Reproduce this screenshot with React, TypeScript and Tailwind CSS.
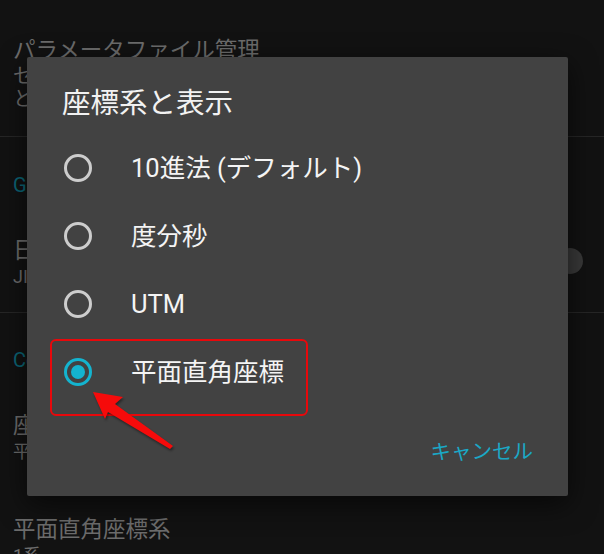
import React from 'react'

const font = { fontFamily: 'Roboto, "Noto Sans CJK JP", sans-serif' }

function Radio({ checked }: { checked?: boolean }) {
  if (checked) {
    return (
      <div className="w-[28px] h-[28px] rounded-full border-[3px] border-[#14b4cf] flex items-center justify-center shrink-0">
        <div className="w-[14px] h-[14px] rounded-full bg-[#14b4cf]" />
      </div>
    )
  }
  return <div className="w-[28px] h-[28px] rounded-full border-[3px] border-[#cdcdcd] shrink-0" />
}

const options = [
  { label: '10進法 (デフォルト)', checked: false },
  { label: '度分秒', checked: false },
  { label: 'UTM', checked: false },
  { label: '平面直角座標', checked: true },
]

export default function App() {
  return (
    <div className="relative w-[604px] h-[554px] overflow-hidden bg-[#121212] text-[#6c6c6c]" style={font}>
      {/* settings list behind the dialog */}
      <div className="flex flex-col">
        <div className="h-[137px] border-b border-[#262626] pl-[13px] pt-[35px] flex flex-col">
          <div className="text-[22.5px] leading-[30px]">パラメータファイル管理</div>
          <div className="text-[20px] leading-[23px] whitespace-nowrap w-[562px] overflow-hidden">セーブされた設定ファイルの読み込みと書き出しを行います</div>
          <div className="text-[20px] leading-[23px]">と削除</div>
        </div>
        <div className="h-[176px] border-b border-[#262626] relative">
          <div className="absolute top-[35px] left-[13px] text-[20px] leading-[26px] text-[#0b6475]">GPS</div>
        </div>
      </div>
      <div className="absolute top-[235px] left-[13px] flex flex-col">
        <div className="text-[22.5px] leading-[30px]">日本測地系</div>
        <div className="text-[18px] leading-[24px]">JIS</div>
      </div>
      <div className="absolute top-[248px] left-[557px] w-[26px] h-[26px] rounded-full bg-[#393939]" />
      <div className="absolute top-[347px] left-[13px] text-[20px] leading-[26px] text-[#0b6475]">Coordinates</div>
      <div className="absolute top-[410px] left-[13px] flex flex-col">
        <div className="text-[22.5px] leading-[30px]">座標系と表示</div>
        <div className="text-[18px] leading-[24px]">平面直角座標</div>
      </div>
      <div className="absolute top-[514px] left-[13px] flex flex-col">
        <div className="text-[22.5px] leading-[30px]">平面直角座標系</div>
        <div className="text-[18px] leading-[24px]">1系</div>
      </div>

      {/* dialog */}
      <div className="absolute left-[27px] top-[57px] w-[541px] h-[439px] bg-[#424242] rounded-[2px] shadow-[0_8px_28px_rgba(0,0,0,0.6)] flex flex-col pt-[31px]">
        <div className="pl-[35px] text-[28.5px] leading-[32px] text-[#f2f2f2]">座標系と表示</div>
        <div className="mt-[14px] flex flex-col">
          {options.map((o) => (
            <div key={o.label} className="h-[68px] flex items-center pl-[37px]">
              <Radio checked={o.checked} />
              <span className="ml-[39px] text-[25.5px] leading-[30px] text-[#f4f4f4]">{o.label}</span>
            </div>
          ))}
        </div>
        <div className="mt-[26px] h-[40px] flex items-center justify-end pr-[35px]">
          <span className="text-[20.5px] text-[#1aa8c6]">キャンセル</span>
        </div>
      </div>

      {/* annotation */}
      <div className="absolute left-[50px] top-[339px] w-[258px] h-[77px] rounded-[6px] border-2 border-[#e8080b]" />
      <svg className="absolute left-0 top-0" width="604" height="554" viewBox="0 0 604 554">
        <polygon
          points="93,392 123,397 115,404 173,446 170,449 108,412 105,419"
          fill="#f60b0b"
          style={{ filter: 'drop-shadow(1px 2px 1px rgba(0,0,0,0.4))' }}
        />
      </svg>
    </div>
  )
}
